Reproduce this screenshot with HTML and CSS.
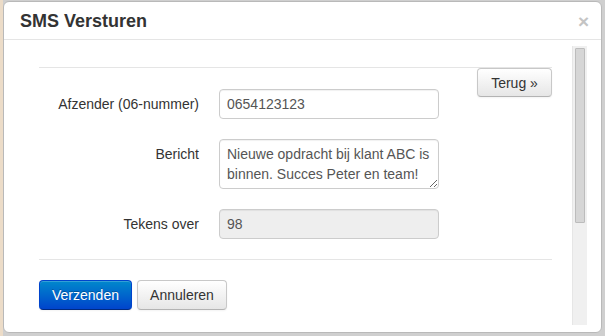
FILE: index.html
```html
<!DOCTYPE html>
<html lang="nl">
<head>
<meta charset="utf-8">
<title>SMS Versturen</title>
<link rel="stylesheet" href="styles.css">
</head>
<body>
<div class="modal">
  <div class="modal-header">
    <h3 class="modal-title">SMS Versturen</h3>
    <span class="close">×</span>
  </div>
  <div class="modal-body">
    <div class="scroll-content">
      <div class="divider"></div>
      <div class="form-top">
        <div class="fields">
          <div class="row">
            <label class="label">Afzender (06-nummer)</label>
            <input class="control" type="text" value="0654123123">
          </div>
          <div class="row">
            <label class="label">Bericht</label>
            <textarea class="control area">Nieuwe opdracht bij klant ABC is binnen. Succes Peter en team!</textarea>
          </div>
          <div class="row">
            <label class="label">Tekens over</label>
            <input class="control disabled" type="text" value="98" disabled>
          </div>
        </div>
        <button class="btn btn-back">Terug »</button>
      </div>
      <div class="divider"></div>
      <div class="actions">
        <button class="btn btn-primary">Verzenden</button>
        <button class="btn">Annuleren</button>
      </div>
    </div>
    <div class="scrollbar"><div class="thumb"></div></div>
  </div>
</div>
</body>
</html>
```
FILE: styles.css
```css
html, body {
  margin: 0;
  padding: 0;
}
body {
  background: #cfcfcf;
  font-family: "Liberation Sans", Arial, sans-serif;
  font-size: 14px;
  color: #333;
  width: 605px;
  height: 336px;
  overflow: hidden;
  border-left: 3px solid #ecdcc8;
  box-sizing: border-box;
}
.modal {
  margin-top: 1px;
  width: 599px;
  height: 332px;
  box-sizing: border-box;
  background: #fff;
  border: 1px solid #b9b9b9;
  border-radius: 6px;
  display: flex;
  flex-direction: column;
  overflow: hidden;
}
.modal-header {
  height: 38px;
  box-sizing: border-box;
  border-bottom: 1px solid #e5e5e5;
  display: flex;
  align-items: center;
  justify-content: space-between;
  padding: 0 12px 0 16px;
  flex: none;
}
.modal-title {
  margin: 0;
  font-size: 18px;
  font-weight: bold;
  color: #333;
  line-height: 20px;
  padding-top: 1px;
}
.close {
  font-size: 19px;
  font-weight: bold;
  color: #c4c4c4;
  line-height: 20px;
  padding-top: 3px;
}
.modal-body {
  flex: 1;
  display: flex;
  padding: 6px 14px 7px 0;
  min-height: 0;
}
.scroll-content {
  flex: 1;
  padding: 21px 20px 0 35px;
}
.divider {
  height: 1px;
  background: #e5e5e5;
}
.form-top {
  display: flex;
  justify-content: space-between;
  align-items: flex-start;
}
.fields {
  display: flex;
  flex-direction: column;
  gap: 20px;
  padding: 21px 0 20px;
}
.row {
  display: grid;
  grid-template-columns: 160px 220px;
  column-gap: 20px;
  align-items: start;
}
.label {
  text-align: right;
  padding-top: 5px;
  line-height: 20px;
  color: #333;
}
.control {
  box-sizing: border-box;
  width: 220px;
  height: 30px;
  border: 1px solid #ccc;
  border-radius: 4px;
  padding: 0 7px;
  font-family: "Liberation Sans", Arial, sans-serif;
  font-size: 14px;
  color: #555;
  background: #fff;
  margin: 0;
  box-shadow: inset 0 1px 1px rgba(0,0,0,0.06);
}
.area {
  height: 50px;
  padding: 4px 4px 0 7px;
  line-height: 20px;
  resize: vertical;
  overflow: hidden;
}
.disabled {
  background: #eee;
  color: #555;
  -webkit-text-fill-color: #555;
  opacity: 1;
}
.btn {
  box-sizing: border-box;
  height: 30px;
  padding: 0 12px;
  font-family: "Liberation Sans", Arial, sans-serif;
  font-size: 14px;
  color: #333;
  border: 1px solid #c8c8c8;
  border-bottom-color: #b3b3b3;
  border-radius: 4px;
  background: linear-gradient(#ffffff, #e6e6e6);
  box-shadow: inset 0 1px 0 rgba(255,255,255,0.2), 0 1px 2px rgba(0,0,0,0.05);
  margin: 0;
}
.btn-back {
  width: 75px;
  height: 29px;
  flex: none;
}
.btn-primary {
  color: #fff;
  background: linear-gradient(#0088cc, #0044cc);
  border-color: #0044cc #0044cc #002a80;
  text-shadow: 0 -1px 0 rgba(0,0,0,0.25);
  width: 93px;
}
.actions {
  display: flex;
  gap: 5px;
  padding-top: 20px;
}
.actions .btn:last-child {
  width: 90px;
}
.scrollbar {
  width: 15px;
  flex: none;
  background: #f0f0f0;
  border-left: 1px solid #e6e6e6;
  box-sizing: border-box;
  padding: 2px 2px 0 2px;
}
.thumb {
  height: 175px;
  background: #d6d6d6;
  border: 1px solid #bcbcbc;
  border-radius: 1px;
  box-sizing: border-box;
}
```
